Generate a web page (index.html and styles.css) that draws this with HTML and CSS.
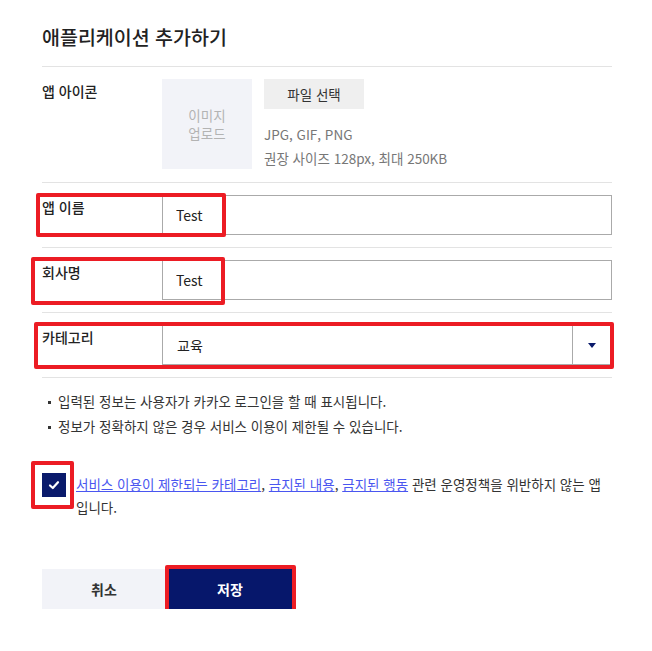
FILE: index.html
```html
<!DOCTYPE html>
<html lang="ko">
<head>
    <meta charset="UTF-8">
    <meta name="viewport" content="width=device-width, initial-scale=1.0">
    <title>애플리케이션 추가하기</title>
    <link rel="stylesheet" href="styles.css">
</head>
<body>
    <div class="page">
        <h1 class="title">애플리케이션 추가하기</h1>

        <div class="row">
            <div class="label">앱 아이콘</div>
            <div class="icon-field">
                <div class="icon-box">이미지<br>업로드</div>
                <div class="icon-info">
                    <button class="file-btn">파일 선택</button>
                    <p class="hint">JPG, GIF, PNG</p>
                    <p class="hint">권장 사이즈 128px, 최대 250KB</p>
                </div>
            </div>
        </div>

        <div class="row">
            <div class="label">앱 이름</div>
            <input class="text-input" type="text" value="Test">
        </div>

        <div class="row">
            <div class="label">회사명</div>
            <input class="text-input" type="text" value="Test">
        </div>

        <div class="row">
            <div class="label">카테고리</div>
            <div class="select">
                <span class="select-value">교육</span>
                <span class="select-arrow"><span class="triangle"></span></span>
            </div>
        </div>

        <ul class="notes">
            <li>입력된 정보는 사용자가 카카오 로그인을 할 때 표시됩니다.</li>
            <li>정보가 정확하지 않은 경우 서비스 이용이 제한될 수 있습니다.</li>
        </ul>

        <div class="agree">
            <span class="checkbox">
                <svg width="14" height="14" viewBox="0 0 14 14">
                    <path d="M3 7.5 L5.8 10 L11 4.2" fill="none" stroke="#fff" stroke-width="2.2" stroke-linecap="round" stroke-linejoin="round"/>
                </svg>
            </span>
            <p class="agree-text"><a href="#">서비스 이용이 제한되는 카테고리</a>, <a href="#">금지된 내용</a>, <a href="#">금지된 행동</a> 관련 운영정책을 위반하지 않는 앱입니다.</p>
        </div>

        <div class="actions">
            <button class="btn btn-cancel">취소</button>
            <button class="btn btn-save">저장</button>
        </div>

        <!-- red highlight marks drawn over the form -->
        <div class="mark mark-name"></div>
        <div class="mark mark-company"></div>
        <div class="mark mark-category"></div>
        <div class="mark mark-check"></div>
        <div class="mark mark-save"></div>
    </div>
</body>
</html>
```

FILE: styles.css
```css
body {
    margin: 0;
    padding: 0;
    background-color: #fff;
    color: #222;
    font-family: "Noto Sans CJK KR", "Noto Sans", sans-serif;
}
.page {
    position: relative;
    width: 570px;
    padding: 0 40px 0 42px;
}
.title {
    margin: 0;
    padding: 22px 0 14px;
    font-size: 19.5px;
    font-weight: 500;
    line-height: 30px;
    border-bottom: 1px solid #e3e3e3;
}
.row {
    display: grid;
    grid-template-columns: 120px 1fr;
    padding: 12px 0;
    border-bottom: 1px solid #e3e3e3;
}
.label {
    font-size: 14px;
    line-height: 24px;
    font-weight: 500;
}
.icon-field {
    display: flex;
    gap: 12px;
}
.icon-box {
    width: 90px;
    height: 90px;
    display: flex;
    align-items: center;
    justify-content: center;
    text-align: center;
    background-color: #f2f3f8;
    color: #b3b3b3;
    font-size: 13.5px;
    line-height: 18px;
}
.file-btn {
    width: 100px;
    height: 30px;
    border: none;
    background-color: #efefef;
    color: #333;
    font-family: inherit;
    font-size: 13.5px;
    padding: 0;
    margin-bottom: 13px;
}
.hint {
    margin: 0;
    color: #777;
    font-size: 13.5px;
    line-height: 24px;
}
.text-input {
    box-sizing: border-box;
    height: 40px;
    width: 100%;
    margin: 0;
    padding: 0 13px;
    border: 1px solid #aaa;
    font-family: inherit;
    font-size: 14px;
    color: #222;
}
.select {
    box-sizing: border-box;
    height: 40px;
    display: flex;
    border: 1px solid #aaa;
}
.select-value {
    flex: 1;
    padding-left: 14px;
    font-size: 14px;
    line-height: 38px;
}
.select-arrow {
    width: 38px;
    border-left: 1px solid #aaa;
    display: flex;
    align-items: center;
    justify-content: center;
}
.triangle {
    width: 0;
    height: 0;
    border-left: 4px solid transparent;
    border-right: 4px solid transparent;
    border-top: 5px solid #0a1a6b;
}
.notes {
    list-style: none;
    margin: 11px 0 0;
    padding: 0 0 0 16px;
    font-size: 13.5px;
    line-height: 25px;
    color: #333;
}
.notes li {
    position: relative;
}
.notes li::before {
    content: "";
    position: absolute;
    left: -10px;
    top: 12px;
    width: 3px;
    height: 3px;
    background-color: #333;
}
.agree {
    display: flex;
    gap: 10px;
    margin-top: 34px;
}
.checkbox {
    flex: none;
    width: 24px;
    height: 24px;
    margin-top: 0;
    background-color: #0a1a6b;
    display: flex;
    align-items: center;
    justify-content: center;
}
.agree-text {
    margin: 0;
    font-size: 13.5px;
    line-height: 23px;
    color: #333;
}
.agree-text a {
    color: #4a56f0;
}
.actions {
    display: flex;
    gap: 2px;
    margin-top: 50px;
}
.btn {
    width: 124px;
    height: 40px;
    border: none;
    font-family: inherit;
    font-size: 14px;
    font-weight: 700;
    padding: 0;
}
.btn-cancel {
    background-color: #f2f3f8;
    color: #333;
}
.btn-save {
    background-color: #06176b;
    color: #fff;
}
.mark {
    position: absolute;
    box-sizing: border-box;
    border: 4px solid #ec1c24;
    border-radius: 2px;
}
.mark-name { left: 36px; top: 193px; width: 190px; height: 44px; }
.mark-company { left: 31px; top: 257px; width: 194px; height: 48px; }
.mark-category { left: 34px; top: 322px; width: 580px; height: 47px; }
.mark-check { left: 31px; top: 461px; width: 43px; height: 48px; }
.mark-save { left: 165px; top: 565px; width: 131px; height: 48px; }
```
